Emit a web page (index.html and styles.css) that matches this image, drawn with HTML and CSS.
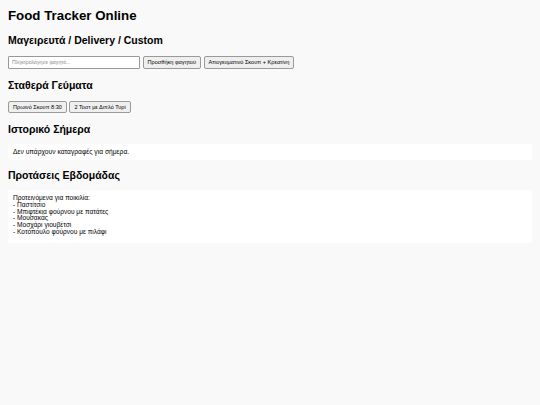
FILE: index.html
```html
<!DOCTYPE html>
<html lang="el">
<head>
<meta charset="utf-8">
<title>Food Tracker Online</title>
<link rel="stylesheet" href="styles.css">
</head>
<body>
<h1 class="title">Food Tracker Online</h1>

<h2 class="section-title">Μαγειρευτά / Delivery / Custom</h2>
<div class="row">
  <input class="food-input" type="text" placeholder="Πληκτρολόγησε φαγητό...">
  <button class="btn">Προσθήκη φαγητού</button>
  <button class="btn">Απογευματινό Σκουπ + Κρεατίνη</button>
</div>

<h2 class="section-title">Σταθερά Γεύματα</h2>
<div class="row">
  <button class="btn">Πρωινό Σκουπ 8:30</button>
  <button class="btn">2 Τοστ με Διπλό Τυρί</button>
</div>

<h2 class="section-title">Ιστορικό Σήμερα</h2>
<div class="panel">Δεν υπάρχουν καταγραφές για σήμερα.</div>

<h2 class="section-title">Προτάσεις Εβδομάδας</h2>
<div class="panel panel-list">Προτεινόμενα για ποικιλία:
- Παστίτσιο
- Μπιφτέκια φούρνου με πατάτες
- Μουσακάς
- Μοσχάρι γιουβέτσι
- Κοτόπουλο φούρνου με πιλάφι
</div>
</body>
</html>
```

FILE: styles.css
```css
html, body {
  margin: 0;
  padding: 0;
}
body {
  background: #f9f9f9;
  font-family: "Liberation Sans", Arial, sans-serif;
  color: #000;
  padding: 8px;
}
.title {
  font-size: 13.3px;
  font-weight: bold;
  margin: 0 0 10px 0;
  line-height: 16px;
}
.section-title {
  font-size: 10.5px;
  font-weight: bold;
  margin: 0 0 9px 0;
  line-height: 12px;
}
.row {
  display: flex;
  align-items: center;
  gap: 2.5px;
  padding-top: 1px;
  margin: 0 0 10px 0;
}
.food-input {
  box-sizing: border-box;
  width: 132px;
  height: 12.5px;
  border: 1px solid #999;
  border-radius: 1px;
  background: #fff;
  padding: 0 3px;
  font-family: "Liberation Sans", Arial, sans-serif;
  font-size: 5.2px;
  margin: 0;
}
.food-input::placeholder {
  color: #8a8a8a;
}
.btn {
  box-sizing: border-box;
  height: 12.5px;
  padding: 0 4px;
  margin: 0;
  border: 1px solid #9a9a9a;
  border-radius: 2px;
  background: #efefef;
  color: #000;
  font-family: "Liberation Sans", Arial, sans-serif;
  font-size: 5.6px;
}
.panel {
  background: #fff;
  border-radius: 2px;
  padding: 4px 5px;
  font-size: 6.7px;
  line-height: 8px;
  margin-bottom: 9px;
}
.panel-list {
  white-space: pre-line;
  font-size: 6.6px;
  line-height: 6.8px;
  padding: 5px 5px 7px 5px;
}
```
